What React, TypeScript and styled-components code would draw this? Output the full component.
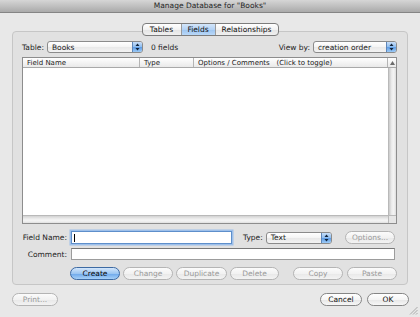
import React from "react";
import styled, { createGlobalStyle, css } from "styled-components";

const GlobalStyle = createGlobalStyle`
  html, body { margin: 0; padding: 0; background: #e8e8e8; }
  body {
    font-family: "DejaVu Sans", Verdana, sans-serif;
    font-size: 7.5px;
    color: #1c1c1c;
  }
  * { box-sizing: border-box; }
`;

const Window = styled.div`
  position: relative;
  width: 420px;
  height: 317px;
  display: flex;
  flex-direction: column;
  background: #e8e8e8;
  overflow: hidden;
`;

const TitleBar = styled.div`
  height: 13px;
  flex: none;
  display: flex;
  align-items: center;
  justify-content: center;
  background: linear-gradient(#d6d6d6, #aaaaaa);
  border-bottom: 1px solid #858585;
  color: #262626;
  padding-bottom: 1px;
`;

const Content = styled.div`
  flex: 1;
  display: flex;
  flex-direction: column;
  padding: 10px 12px 0 12px;
`;

const TabRow = styled.div`
  position: relative;
  z-index: 1;
  display: flex;
  justify-content: center;
  margin-bottom: -5px;
`;

const Segmented = styled.div`
  display: flex;
  height: 13px;
  border: 1px solid #7c7c7c;
  border-radius: 4px;
  overflow: hidden;
  background: linear-gradient(#ffffff 0%, #f2f2f2 50%, #e4e4e4 51%, #f0f0f0 100%);
`;

const Segment = styled.div<{ $w: number; $active?: boolean }>`
  width: ${(p) => p.$w}px;
  display: flex;
  align-items: center;
  justify-content: center;
  color: #111;
  & + & { border-left: 1px solid #9a9a9a; }
  ${(p) =>
    p.$active &&
    css`
      background: linear-gradient(#d4e6fa 0%, #b3d2f5 50%, #9cc4f0 51%, #b9d8f8 100%);
    `}
`;

const GroupBox = styled.div`
  border: 1px solid #c6c6c6;
  border-radius: 4px;
  background: #e1e1e1;
  padding: 9px 10px 4px 9px;
  display: flex;
  flex-direction: column;
`;

const TopRow = styled.div`
  height: 12px;
  display: flex;
  align-items: center;
`;

const Label = styled.span<{ $ml?: number; $mr?: number }>`
  margin-left: ${(p) => p.$ml ?? 0}px;
  margin-right: ${(p) => p.$mr ?? 3}px;
  white-space: nowrap;
`;

const Count = styled.span`
  margin-left: 8px;
`;

const Spacer = styled.div`
  flex: 1;
`;

const PopupBox = styled.div<{ $w: number }>`
  width: ${(p) => p.$w}px;
  height: 12px;
  display: flex;
  border: 1px solid #8b8b8b;
  border-radius: 3px;
  overflow: hidden;
  background: linear-gradient(#ffffff 0%, #f4f4f4 50%, #e8e8e8 51%, #f3f3f3 100%);
`;

const PopupText = styled.div`
  flex: 1;
  padding-left: 4px;
  display: flex;
  align-items: center;
  white-space: nowrap;
`;

const PopupArrows = styled.div`
  width: 10px;
  display: flex;
  align-items: center;
  justify-content: center;
  border-left: 1px solid #5d86b9;
  background: linear-gradient(#c7def8 0%, #8ebdf0 50%, #5d9be4 51%, #9ccaf6 100%);
`;

const Popup = ({ w, children }: { w: number; children: React.ReactNode }) => (
  <PopupBox $w={w}>
    <PopupText>{children}</PopupText>
    <PopupArrows>
      <svg width="5" height="8" viewBox="0 0 5 8">
        <path d="M2.5 0.5 L4.5 3 H0.5 Z M2.5 7.5 L4.5 5 H0.5 Z" fill="#10243c" />
      </svg>
    </PopupArrows>
  </PopupBox>
);

const List = styled.div`
  margin-top: 4px;
  height: 167px;
  border: 1px solid #8d8d8d;
  background: #ffffff;
  display: grid;
  grid-template-columns: 1fr 8px;
  grid-template-rows: 10px 1fr 8px;
`;

const Header = styled.div`
  display: flex;
  background: linear-gradient(#ffffff, #e9e9e9);
  border-bottom: 1px solid #a9a9a9;
`;

const HeaderCell = styled.div<{ $w?: number }>`
  ${(p) => (p.$w ? css`width: ${p.$w}px;` : css`flex: 1;`)}
  display: flex;
  align-items: center;
  padding-left: 4px;
  border-right: 1px solid #b4b4b4;
  white-space: nowrap;
  color: #222;
  font-size: 7px;
`;

const Corner = styled.div`
  display: flex;
  align-items: center;
  justify-content: center;
  background: linear-gradient(#ffffff, #e9e9e9);
  border-bottom: 1px solid #a9a9a9;
`;

const Rows = styled.div`
  background: #ffffff;
`;

const VTrack = styled.div`
  background: linear-gradient(90deg, #c9c9c9, #ededed 40%, #f4f4f4 70%, #dcdcdc);
  border-left: 1px solid #b9b9b9;
`;

const HTrack = styled.div`
  background: linear-gradient(#d2d2d2, #efefef 45%, #f4f4f4 70%, #e0e0e0);
  border-top: 1px solid #b9b9b9;
`;

const GrowBox = styled.div`
  background: #e6e6e6;
  border-top: 1px solid #b9b9b9;
  border-left: 1px solid #b9b9b9;
`;

const FormRow = styled.div<{ $mt: number; $h: number }>`
  margin-top: ${(p) => p.$mt}px;
  height: ${(p) => p.$h}px;
  display: flex;
  align-items: center;
`;

const FormLabel = styled.span`
  width: 45px;
  margin-right: 4px;
  text-align: right;
  white-space: nowrap;
`;

const TextField = styled.div<{ $w?: number; $focus?: boolean }>`
  ${(p) => (p.$w ? css`width: ${p.$w}px;` : css`flex: 1;`)}
  height: 100%;
  margin-right: ${(p) => (p.$w ? 0 : 2)}px;
  background: #ffffff;
  border: 1px solid #9c9c9c;
  border-top-color: #777;
  display: flex;
  align-items: center;
  padding-left: 2px;
  ${(p) =>
    p.$focus &&
    css`
      border-color: #5e8fcb;
      box-shadow: 0 0 0 1.5px #9ec0ea;
    `}
`;

const Caret = styled.span`
  width: 1px;
  height: 8px;
  background: #000;
`;

const ButtonRow = styled.div`
  margin-top: 7px;
  height: 13px;
  display: flex;
  align-items: center;
  gap: 3px;
  padding-left: 48px;
`;

const Button = styled.div<{ $w: number; $disabled?: boolean; $default?: boolean; $ml?: number }>`
  width: ${(p) => p.$w}px;
  height: 13px;
  margin-left: ${(p) => (p.$ml === undefined ? "0" : p.$ml < 0 ? "auto" : `${p.$ml}px`)};
  border-radius: 7px;
  border: 1px solid #858585;
  background: linear-gradient(#ffffff 0%, #f5f5f5 50%, #e6e6e6 51%, #f7f7f7 100%);
  display: flex;
  align-items: center;
  justify-content: center;
  color: #111;
  white-space: nowrap;
  flex: none;
  ${(p) =>
    p.$disabled &&
    css`
      color: #9a9a9a;
      border-color: #b4b4b4;
      background: linear-gradient(#fbfbfb 0%, #f2f2f2 50%, #e8e8e8 51%, #f3f3f3 100%);
    `}
  ${(p) =>
    p.$default &&
    css`
      border-color: #3d6aa3;
      background: linear-gradient(#d3e6fb 0%, #9cc6f2 50%, #6ca7ea 51%, #a6d0f8 100%);
      color: #0a0a0a;
    `}
`;

const Footer = styled.div`
  margin-top: 8px;
  height: 13px;
  display: flex;
  align-items: center;
  gap: 5px;
  padding-right: 0;
  margin-right: -1px;
`;

const Grip = styled.div`
  position: absolute;
  right: 2px;
  bottom: 2px;
  width: 9px;
  height: 9px;
`;

export default function App() {
  return (
    <>
      <GlobalStyle />
      <Window>
        <TitleBar>Manage Database for "Books"</TitleBar>
        <Content>
          <TabRow>
            <Segmented>
              <Segment $w={38}>Tables</Segment>
              <Segment $w={34} $active>
                Fields
              </Segment>
              <Segment $w={63}>Relationships</Segment>
            </Segmented>
          </TabRow>
          <GroupBox>
            <TopRow>
              <Label>Table:</Label>
              <Popup w={96}>Books</Popup>
              <Count>0 fields</Count>
              <Spacer />
              <Label>View by:</Label>
              <Popup w={84}>creation order</Popup>
            </TopRow>
            <List>
              <Header>
                <HeaderCell $w={117}>Field Name</HeaderCell>
                <HeaderCell $w={54}>Type</HeaderCell>
                <HeaderCell>Options / Comments&nbsp;&nbsp;&nbsp;(Click to toggle)</HeaderCell>
              </Header>
              <Corner>
                <svg width="5" height="4" viewBox="0 0 5 4">
                  <path d="M2.5 0 L5 4 H0 Z" fill="#6b6b6b" />
                </svg>
              </Corner>
              <Rows />
              <VTrack />
              <HTrack />
              <GrowBox />
            </List>
            <FormRow $mt={7} $h={13}>
              <FormLabel>Field Name:</FormLabel>
              <TextField $w={161} $focus>
                <Caret />
              </TextField>
              <Label $ml={11} $mr={3}>
                Type:
              </Label>
              <Popup w={66}>Text</Popup>
              <Spacer />
              <Button $w={50} $disabled style={{ marginRight: 2 }}>
                Options...
              </Button>
            </FormRow>
            <FormRow $mt={4} $h={12}>
              <FormLabel>Comment:</FormLabel>
              <TextField />
            </FormRow>
            <ButtonRow>
              <Button $w={50} $default>
                Create
              </Button>
              <Button $w={50} $disabled>
                Change
              </Button>
              <Button $w={51} $disabled>
                Duplicate
              </Button>
              <Button $w={49} $disabled>
                Delete
              </Button>
              <Button $w={50} $disabled $ml={-1}>
                Copy
              </Button>
              <Button $w={50} $disabled $ml={1}>
                Paste
              </Button>
            </ButtonRow>
          </GroupBox>
          <Footer>
            <Button $w={46} $disabled>
              Print...
            </Button>
            <Spacer />
            <Button $w={42}>Cancel</Button>
            <Button $w={42}>OK</Button>
          </Footer>
        </Content>
        <Grip>
          <svg width="9" height="9" viewBox="0 0 9 9">
            <path d="M8.5 1 L1 8.5 M8.5 4 L4 8.5 M8.5 7 L7 8.5" stroke="#9a9a9a" strokeWidth="0.8" />
          </svg>
        </Grip>
      </Window>
    </>
  );
}
